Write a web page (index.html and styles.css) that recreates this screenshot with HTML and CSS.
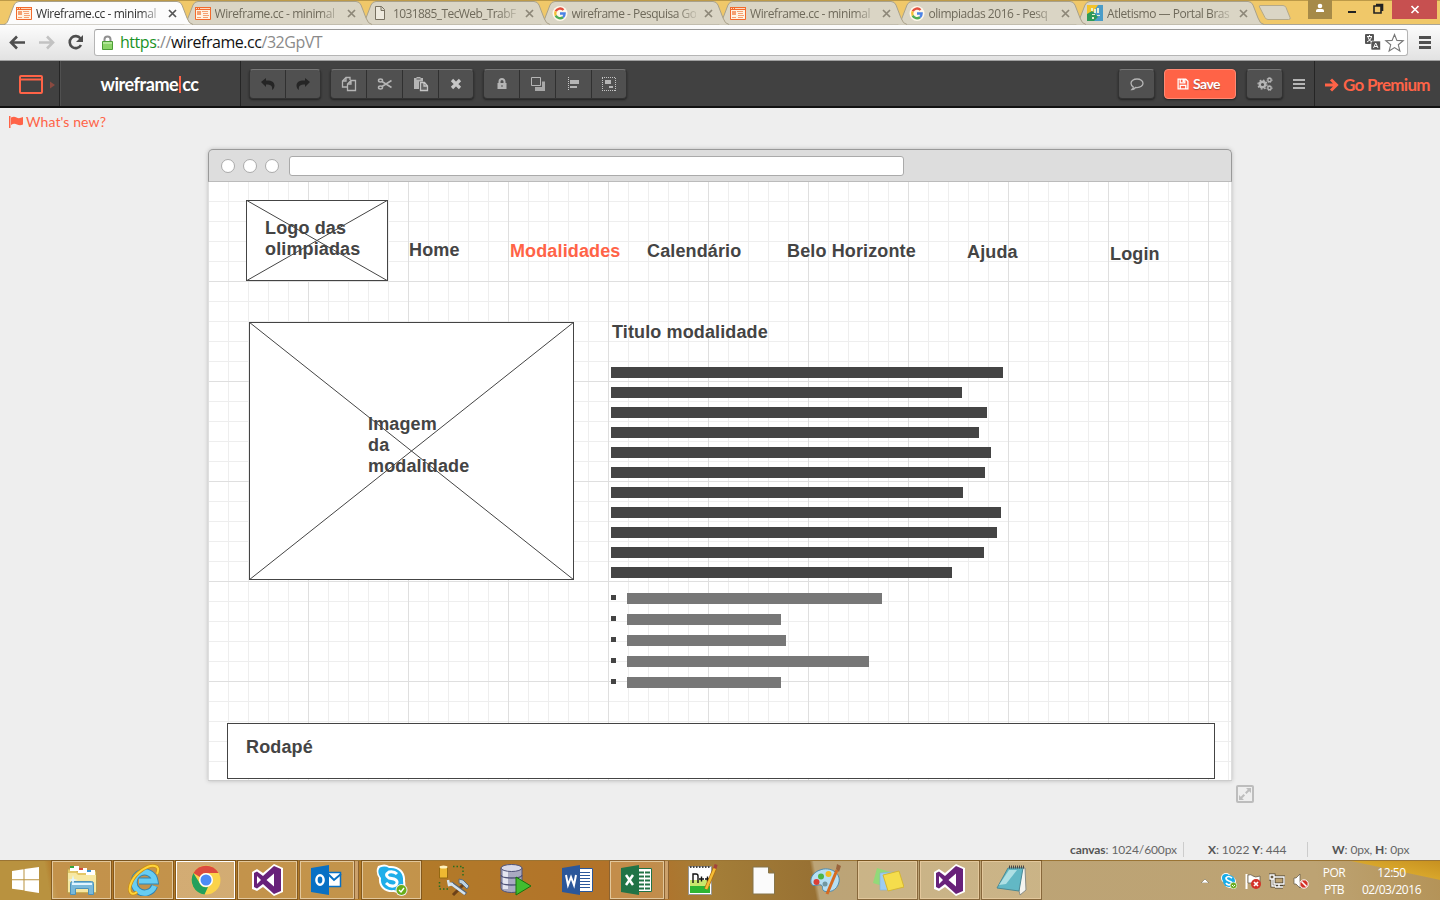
FILE: index.html
```html
<!DOCTYPE html>
<html lang="pt-BR">
<head>
<meta charset="utf-8">
<title>Wireframe.cc - minimal</title>
<link rel="stylesheet" href="styles.css">
</head>
<body>
<svg class="defs" width="0" height="0">
  <symbol id="tabshape" viewBox="0 0 190 25"><path d="M0 24.500C3 24 4 21 5 18L10 5Q11.500 1.500 15 1.500H173Q176.500 1.500 178 5L183 18Q185 24 189 24.500" /></symbol>
  <symbol id="wf" viewBox="0 0 16 13"><path fill="#fff3e2" stroke="#f26a2c" d="M.5.5h15v12H.5z"/><path fill="#f26a2c" d="M0 0h16v3H0z"/><path fill="#ffd9bd" d="M1 1h1v1H1zM3 1h1v1H3zM5 1h10v1H5z"/><path fill="#f5a071" d="M2 4h4v4H2zM2 10h4v1H2zM7 4h6v1H7zM8 6h5v1H8zM8 8h6v1H8zM8 10h5v1H8z"/></symbol>
  <symbol id="x" viewBox="0 0 9 9"><path d="M1 1l7 7M8 1L1 8" fill="none" stroke="currentColor" stroke-width="1.700"/></symbol>
  <symbol id="goog" viewBox="0 0 14 14"><circle cx="7" cy="7" r="7" fill="#fff8eb"/><g fill="none" stroke-width="2.200"><path stroke="#e34f3d" d="M3 5a4.500 4.500 0 0 1 7.300-1.300"/><path stroke="#f5bd32" d="M3 5a4.500 4.500 0 0 0 0 4"/><path stroke="#4fac56" d="M3 9a4.500 4.500 0 0 0 6.800 1.500"/><path stroke="#4b83e6" d="M7 7h4.300q0 2.300-1.500 3.500"/></g></symbol>
  <symbol id="vs" viewBox="0 0 32 32"><path d="M22 0l9 4v24l-9 4-11-9-6 4-5-2V8l5-3 6 4z" fill="#fff"/><path d="M22 2l7 3v22l-7 3L11 20l-6 4.500L2 23V9l3-1.500L11 12zM22 9.500L14.500 16l7.500 6.500zM5 12v8l4-4z" fill="#68217a" fill-rule="evenodd"/></symbol>
</svg>

<header class="tabs">
  <div class="tab active"><svg class="shape"><use href="#tabshape"/></svg><svg class="fav"><use href="#wf"/></svg><span>Wireframe.cc - minimal</span><svg class="cl"><use href="#x"/></svg></div>
  <div class="tab t2"><svg class="shape"><use href="#tabshape"/></svg><svg class="fav"><use href="#wf"/></svg><span>Wireframe.cc - minimal</span><svg class="cl"><use href="#x"/></svg></div>
  <div class="tab t3"><svg class="shape"><use href="#tabshape"/></svg><svg class="fav doc" viewBox="0 0 16 14"><path d="M3.500.5h6l3 3v10h-9zM9 .5v4h4" fill="#eeeade" stroke="#777060"/></svg><span>1031885_TecWeb_TrabF</span><svg class="cl"><use href="#x"/></svg></div>
  <div class="tab t4"><svg class="shape"><use href="#tabshape"/></svg><svg class="fav g"><use href="#goog"/></svg><span>wireframe - Pesquisa Go</span><svg class="cl"><use href="#x"/></svg></div>
  <div class="tab t5"><svg class="shape"><use href="#tabshape"/></svg><svg class="fav"><use href="#wf"/></svg><span>Wireframe.cc - minimal</span><svg class="cl"><use href="#x"/></svg></div>
  <div class="tab t6"><svg class="shape"><use href="#tabshape"/></svg><svg class="fav g"><use href="#goog"/></svg><span>olimpiadas 2016 - Pesq</span><svg class="cl"><use href="#x"/></svg></div>
  <div class="tab t7"><svg class="shape"><use href="#tabshape"/></svg><svg class="fav sq" viewBox="0 0 16 16"><path fill="#4a9cc8" d="M0 0h16v16H0z"/><path fill="#f3c32a" d="M0 0h11L4 10H0z"/><path fill="#2c9a58" d="M0 9l5-3 6 6-4 4H0z"/><path fill="#e8efd0" d="M4 3h2v3H4zM7 4h2v4H7zM10 3h2v5h-2zM5 9h3v1H5zM10 10h3v1h-3zM5 12h2v2H5z"/></svg><span>Atletismo — Portal Bras</span><svg class="cl"><use href="#x"/></svg></div>
  <svg class="newtab" viewBox="0 0 34 18"><path d="M2 1.500h23q2 0 3 2l4 10q1 2-1.500 2H10q-2 0-3-2L1.500 3Q1 1.500 2 1.500z" fill="#dad5c5" stroke="#b4a98a"/></svg>
  <div class="win">
    <svg class="user" viewBox="0 0 24 19"><circle cx="12" cy="6" r="2.300" fill="#fff"/><path d="M8 12V10.500Q8 9 10 9h4q2 0 2 1.500V12z" fill="#fff"/></svg>
    <svg class="wb" viewBox="0 0 60 19"><path d="M16 11h8v2h-8z" fill="#222"/><path d="M42 6h7v7h-7zM44 4.500h6.500V11" fill="none" stroke="#222" stroke-width="1.600"/></svg>
    <svg class="wclose" viewBox="0 0 45 19"><path d="M19.500 6l7 7m0-7l-7 7" stroke="#fff" stroke-width="1.700"/></svg>
  </div>
</header>

<div class="address">
  <svg class="navs" viewBox="0 0 94 35"><g fill="none" stroke-width="2.600"><path stroke="#4e4e4e" d="M11 17.500h14M17 11.500l-6 6 6 6"/><path stroke="#c2c2c2" d="M39 17.500h14M47 11.500l6 6-6 6"/><path stroke="#4e4e4e" d="M80.500 13.500A6 6 0 1 0 81 20"/></g><path fill="#4e4e4e" d="M83 10v7h-7z"/></svg>
  <div class="omni">
    <svg class="lock" viewBox="0 0 13 16"><path d="M3.500 7V4.500a3 3 0 0 1 6 0V7" fill="none" stroke="#909090" stroke-width="2"/><path d="M1.500 6.500h10v8h-10z" fill="#8bd468" stroke="#4c9d37"/><path d="M2 7h9v2H2z" fill="#b1e797"/></svg>
    <p><span class="green">https</span><span class="grey">://</span>wireframe.cc<span class="grey">/32GpVT</span></p>
    <svg class="omi" viewBox="0 0 42 20"><rect x="1" y="1" width="9" height="10" rx="1" fill="#555"/><rect x="7" y="8" width="9.500" height="9" rx="1" fill="#555" stroke="#fff" stroke-width=".6"/><path d="M3 3.500h5M5.500 2v1.500M4 4q1 4 4 5M7.500 4Q7 7 3 9M9.500 15l2.200-5 2.300 5M10.300 13.500h3" stroke="#fff" fill="none"/><path d="M30.500 1.500l2.400 5.900 6.300.4-4.900 4 1.600 6.200-5.400-3.400-5.400 3.400 1.600-6.200-4.900-4 6.300-.4z" fill="#fff" stroke="#777" stroke-width="1.100"/></svg>
  </div>
  <svg class="burger" viewBox="0 0 14 13"><path d="M1 1.500h12M1 6.500h12M1 11.500h12" stroke="#505050" stroke-width="2.800"/></svg>
</div>

<nav class="app">
  <div class="device"><svg width="40" height="24" viewBox="0 0 40 24"><rect x="2" y="4" width="22" height="17" rx="1" fill="none" stroke="#ff6347" stroke-width="2"/><path d="M2 7.500h22" stroke="#ff6347" stroke-width="2"/><path d="M3 5.500h1M5.500 5.500h1" stroke="#414141"/><path d="M32 9.500v7l5-3.500z" fill="#8a4a40"/></svg></div>
  <div class="brand">wireframe<i></i>cc</div>
  <div class="grp g1">
    <b><svg viewBox="0 0 16 16"><path fill="#252525" d="M1 6l5-4v2.500c5-.5 8.500 1.500 8.500 5 0 2-1 3.500-2.500 4.500.8-4-1-5.500-6-5.500V11z"/></svg></b>
    <b><svg viewBox="0 0 16 16"><path fill="#252525" d="M15 6l-5-4v2.500C5 4 1.500 6 1.500 9.500c0 2 1 3.500 2.500 4.500-.8-4 1-5.500 6-5.500V11z"/></svg></b>
  </div>
  <div class="grp g2">
    <b><svg viewBox="0 0 16 16"><path fill="none" stroke="#b5b5b5" stroke-width="1.300" d="M6 11H1.500V5L5 1.500h4V4M1.500 5H5V1.500M6.500 14.500V8L10 4.500h4.500v10zM6.500 8H10V4.500"/></svg></b>
    <b><svg viewBox="0 0 16 16"><g fill="none" stroke="#b5b5b5" stroke-width="1.500"><ellipse cx="3.500" cy="4.500" rx="2" ry="1.500"/><ellipse cx="3.500" cy="11.500" rx="2" ry="1.500"/><path d="M5 5.500l9.500 6M5 10.500l9.500-6"/></g></svg></b>
    <b><svg viewBox="0 0 16 16"><path fill="#b5b5b5" d="M1 2h2.500V1h4v1H10v3.500H6V13H1z"/><path fill="#555" d="M3.500 2.500h4v1h-4z"/><path fill="#666" stroke="#c5c5c5" stroke-width="1.300" d="M7.500 6.500h4L14.500 10v4.500h-7zM11 6.500V10h3.500"/></svg></b>
    <b><svg viewBox="0 0 16 16"><path d="M4 4l8 8m0-8l-8 8" stroke="#c6c6c6" stroke-width="3.200"/></svg></b>
  </div>
  <div class="grp g3">
    <b><svg viewBox="0 0 16 16"><path fill="#b5b5b5" d="M3.500 7h9v6h-9z"/><path fill="none" stroke="#b5b5b5" stroke-width="2" d="M5.500 8V5.500a2.500 2.500 0 0 1 5 0V8"/><path fill="#555" d="M7.500 9h1v2h-1z"/></svg></b>
    <b><svg viewBox="0 0 16 16"><path fill="#a8a8a8" d="M12 5.500h3V15H5v-4h7z"/><path fill="#505050" stroke="#b5b5b5" d="M1.500 1.500h9v8h-9z"/></svg></b>
    <b><svg viewBox="0 0 16 16"><path stroke="#c5c5c5" stroke-dasharray="1 1" d="M2.500 1v14"/><path fill="#b5b5b5" d="M4 4h9v4H4zM4 10h7v2H4z"/></svg></b>
    <b><svg viewBox="0 0 16 16"><path fill="none" stroke="#c5c5c5" stroke-dasharray="1 1" d="M1 1.500h14M1 14.500h14M1.500 2v13M14.500 2v13"/><path fill="#b5b5b5" d="M4 4h6v4H4zM8 10h4v2H8z"/></svg></b>
  </div>
  <div class="grp g4"><b><svg viewBox="0 0 16 16"><path fill="none" stroke="#b5b5b5" stroke-width="1.300" d="M8 3c3.500 0 6 2 6 4.300s-2.500 4.300-6 4.300l-1.500-.1Q5 13.500 3 13.500 4.500 12 4.300 11 2 9.500 2 7.300C2 5 4.500 3 8 3z"/></svg></b></div>
  <div class="save"><svg viewBox="0 0 13 13"><path fill="none" stroke="#fff" stroke-width="1.400" d="M1.200 1.200h8.300l2.300 2.300v8.300H1.200zM3.500 1.500v3.800h5V1.500M3.500 11.500V8h6v3.500"/><path fill="#fff" d="M6 1h2v3.500H6z"/></svg>Save</div>
  <div class="grp g5"><b><svg viewBox="0 0 16 16"><circle cx="5.500" cy="8.500" r="2.800" fill="none" stroke="#b5b5b5" stroke-width="2.400"/><circle cx="5.500" cy="8.500" r="4.500" fill="none" stroke="#b5b5b5" stroke-width="1.300" stroke-dasharray="1.700 1.830"/><g fill="none" stroke="#b5b5b5" stroke-width="1.400"><circle cx="12.500" cy="4" r="1.700"/><circle cx="12.500" cy="12" r="1.700"/></g><g fill="none" stroke="#b5b5b5" stroke-dasharray="1 1.200"><circle cx="12.500" cy="4" r="2.600"/><circle cx="12.500" cy="12" r="2.600"/></g></svg></b></div>
  <svg class="menu" viewBox="0 0 12 12"><path d="M0 2h12M0 6h12M0 10h12" stroke="#b5b5b5" stroke-width="1.800"/></svg>
  <div class="premium"><svg viewBox="0 0 15 14"><path d="M1 7h11M7 1.500L12.500 7 7 12.500" fill="none" stroke="#ff6347" stroke-width="3"/></svg>Go Premium</div>
</nav>

<main>
  <div class="news"><svg viewBox="0 0 14 12"><path fill="#ff6347" d="M0 0h1.500v12H0zM2 1.500Q5 0 7.500 1.500T14 1v7.500q-3 1.500-6 0T2 9z"/></svg>What's new?</div>
  <section class="browser">
    <div class="bar"><i></i><i></i><i></i><div class="url"></div></div>
    <div class="canvas">
      <svg class="item logo" width="142" height="81"><rect x=".5" y=".5" width="141" height="80"/><path d="M0 0l142 81M142 0L0 81"/></svg>
      <p class="item tlogo">Logo das<br>olimpiadas</p>
      <p class="item home">Home</p>
      <p class="item modal">Modalidades</p>
      <p class="item cal">Calendário</p>
      <p class="item belo">Belo Horizonte</p>
      <p class="item ajuda">Ajuda</p>
      <p class="item login">Login</p>
      <svg class="item image" width="325" height="258"><rect x=".5" y=".5" width="324" height="257"/><path d="M0 0l325 258M325 0L0 258"/></svg>
      <p class="item timage">Imagem<br>da<br>modalidade</p>
      <p class="item title">Titulo modalidade</p>
      <div class="item lines">
        <i style="width:392px"></i><i style="width:351px"></i><i style="width:376px"></i><i style="width:368px"></i><i style="width:380px"></i><i style="width:374px"></i><i style="width:352px"></i><i style="width:390px"></i><i style="width:386px"></i><i style="width:373px"></i><i style="width:341px"></i>
      </div>
      <div class="item list">
        <div><b></b><i style="width:255px"></i></div><div><b></b><i style="width:154px"></i></div><div><b></b><i style="width:159px"></i></div><div><b></b><i style="width:242px"></i></div><div><b></b><i style="width:154px"></i></div>
      </div>
      <div class="item foot">Rodapé</div>
    </div>
    <svg class="resize" viewBox="0 0 18 18"><rect x="1" y="1" width="16" height="16" rx="1" fill="none" stroke="#bdbdbd" stroke-width="2"/><path d="M5 13l8-8" stroke="#bdbdbd" stroke-width="2" stroke-dasharray="4.700 2"/><path fill="#bdbdbd" d="M10 3h5v5zM3 10v5h5z"/></svg>
  </section>
  <div class="status"><span class="s1"><b>canvas</b>: 1024/600px</span><span class="s2"><b>X</b>: 1022 <b>Y</b>: 444</span><span class="s3"><b>W</b>: 0px, <b>H</b>: 0px</span></div>
</main>

<footer class="task">
  <div class="start"><svg viewBox="0 0 28 26"><path fill="#fff" d="M0 4l11.500-1.700v10H0zM12.500 2.100L27 0v12.300H12.500zM0 13.300h11.500v10L0 21.700zM12.500 13.300H27V26l-14.500-2.300z"/></svg></div>
  <div class="tb on"><svg viewBox="0 0 32 32"><path fill="#e4c767" stroke="#b79a4d" d="M1.500 5h8l1 2h20v22h-29z"/><path fill="#fff" d="M4 2h9v5H4zM12 4h9v5h-9zM20 6h9v5h-9z"/><path fill="#35a83a" d="M4 2h4v2H4z"/><path fill="#d64b38" d="M13 4h4v2h-4z"/><path fill="#3b96d1" d="M21 6h4v2h-4z"/><path fill="#f7e8a2" d="M2 9h8l2 2h18v17H2z"/><path fill="#79b9da" stroke="#4e93ba" d="M4.500 19.500q0-2 2-2h19q2 0 2 2v11h-5v-6h-13v6h-5z"/><path fill="#e1f5ff" d="M6 19h20v2H6zM7 11l1 4 4 1-4 1-1 4-1-4-4-1 4-1z"/></svg></div>
  <div class="tb on"><svg viewBox="0 0 32 32"><path d="M26.500 22A10.500 10.500 0 1 1 27 17H11" fill="none" stroke="#2f83b3" stroke-width="7"/><path d="M26.500 22A10.500 10.500 0 1 1 27 17H11" fill="none" stroke="#67cdf3" stroke-width="5.200"/><path d="M29 10q3-7-2-8C20 0 8 9 4 17-1 27 3 33 9 28" fill="none" stroke="#cb9013" stroke-width="3.500"/><path d="M29 10q3-7-2-8C20 0 8 9 4 17-1 27 3 33 9 28" fill="none" stroke="#ffd43a" stroke-width="2"/></svg></div>
  <div class="tb on hot"><svg viewBox="0 0 32 32"><circle cx="16" cy="16" r="14.500" fill="#fbd34a"/><path fill="#dc4b3e" d="M3.400 9A14.500 14.500 0 0 1 28.600 9H16a7 7 0 0 0-6.200 4z"/><path fill="#22a05c" d="M3.400 9l6.500 10.500A7 7 0 0 0 18 23l-3.500 7.400A14.500 14.500 0 0 1 3.400 9z"/><circle cx="16" cy="16" r="7" fill="#fff"/><circle cx="16" cy="16" r="5.500" fill="#4c8bf5"/></svg></div>
  <div class="tb on"><svg><use href="#vs"/></svg></div>
  <div class="tb on multi"><svg viewBox="0 0 32 32"><path fill="#fff" stroke="#0870c4" stroke-width="1.500" d="M15 8.500h14.500v14H15z"/><path d="M17 10l6 6 7-6" fill="none" stroke="#0870c4" stroke-width="2"/><path fill="#0870c4" d="M0 4l18-3v30L0 28z"/><ellipse cx="9" cy="16" rx="3.600" ry="4.700" fill="none" stroke="#fff" stroke-width="2.500"/></svg></div>
  <div class="tb on"><svg viewBox="0 0 32 32"><path fill="#fff" d="M2 2q7-3 11 0c10-1 17 6 16 15 2 9-5 13-11 11C9 29 2 23 3 14Q-1 8 2 2z"/><path fill="#1faee9" d="M4 3.500q5-2 9 .5C22 3 28 9 27 17c1.500 7-4 11-9 9C10 27 4 22 5 14 2 10 1.500 6 4 3.500z"/><path d="M21 10q-3-3-8-2-5 3 0 6l5 1q5 2 2 6-5 3-10-2" fill="none" stroke="#fff" stroke-width="3"/><circle cx="25.500" cy="26" r="6" fill="#eee"/><circle cx="25.500" cy="26" r="5" fill="#68ae19"/><path d="M23 26l2 2 3-4" fill="none" stroke="#fff" stroke-width="1.400"/></svg></div>
  <div class="tb"><svg viewBox="0 0 32 32"><path fill="#eeb931" stroke="#946911" d="M1.500 3h8v11h-8z"/><ellipse cx="5.500" cy="3" rx="4" ry="1.500" fill="#fff2be"/><path d="M15 2.500h10v11M1.500 18v7H12" fill="none" stroke="#256e20" stroke-width="1.500" stroke-dasharray="1.500 2"/><path d="M27 19L15 31" stroke="#6d4118" stroke-width="3"/><path d="M13 19l15 11" stroke="#596676" stroke-width="4"/><path d="M12 19l15 11" stroke="#d4e4f0" stroke-width="2.500"/><path d="M21 15l4 1 6 6-2 3-5-5-3-1z" fill="#bdd2e1" stroke="#5c6b79"/><path d="M10 16l1 5 4-1" fill="none" stroke="#d4e4f0" stroke-width="2.500"/></svg></div>
  <div class="tb"><svg viewBox="0 0 32 32"><path fill="#aaaac2" stroke="#505379" d="M1 4v20c0 6 21 6 21 0V4"/><path d="M3 5v20h5V5z" fill="#e5e5f1"/><ellipse cx="11.500" cy="4" rx="10.500" ry="3.500" fill="#d9d9e7" stroke="#505379"/><path d="M1 11c0 4 21 4 21 0M1 18c0 4 21 4 21 0" fill="none" stroke="#505379" stroke-width="1.300"/><path d="M16 13l15 9-15 9z" fill="#41bd2f" stroke="#18720e"/></svg></div>
  <div class="tb"><svg viewBox="0 0 32 32"><path fill="#fff" stroke="#2b579a" d="M16 4.500h14.500v23H16z"/><path d="M18 8.500h10M18 11.500h10M18 14.500h10M18 17.500h10M18 20.500h10M18 23.500h10" stroke="#2b579a"/><path fill="#2b579a" d="M0 4l18-3v30L0 28z"/><path d="M4 11l2 10 3-8 3 8 2-10" fill="none" stroke="#fff" stroke-width="2"/></svg></div>
  <div class="tb on multi"><svg viewBox="0 0 32 32"><path fill="#fff" stroke="#217346" d="M16 4.500h14.500v23H16z"/><path d="M18 8.500h11M18 12.500h11M18 16.500h11M18 20.500h11M18 24.500h11" stroke="#217346" stroke-width="2" stroke-dasharray="5 1"/><path fill="#217346" d="M0 4l18-3v30L0 28z"/><path d="M5 11l7 10m0-10L5 21" stroke="#fff" stroke-width="2.500"/></svg></div>
  <div class="tb"><svg viewBox="0 0 32 32"><path fill="#fff" stroke="#999" d="M2.500 2.500h23v28h-23z"/><path fill="#c9e86d" d="M4 16h20v7H4z"/><path fill="#2eb632" d="M4 22h20v7H4z"/><path d="M4 3h21" stroke="#444" stroke-width="2" stroke-dasharray="1.500 1.500"/><path d="M7 19v-9h3q2 0 2 2v7M13 15h5M15.500 12.500v5M19 15h5M21.500 12.500v5" fill="none" stroke="#111" stroke-width="1.400"/><path d="M29 4L20 25" stroke="#ac6c12" stroke-width="4"/><path d="M29 4L20 25" stroke="#f5bd35" stroke-width="2.500"/><path d="M28 2l3 1" stroke="#a4433c" stroke-width="4"/></svg></div>
  <div class="tb"><svg viewBox="0 0 32 32"><path fill="#fbfbfb" stroke="#86754a" d="M5 3h15.500l6 6v21H5zM20.500 3v6h6"/></svg></div>
  <div class="tb"><svg viewBox="0 0 32 32"><path fill="#b6dff4" stroke="#4f89aa" d="M10 6C20 2 31 9 29 18c-2 9-10 11-15 9-3-2 0-5-3-6-4-1-8 3-10-2C0 13 4 8 10 6z"/><circle cx="6.500" cy="18" r="3" fill="#db3f35"/><circle cx="11" cy="12.500" r="3" fill="#4cb545"/><circle cx="18.500" cy="10" r="3" fill="#f3bd23"/><circle cx="15" cy="20" r="2.500" fill="#7297a0"/><path d="M27 6L17 30" stroke="#d56b22" stroke-width="3"/><path d="M26 5l1-5 4 2-2 6z" fill="#9a643c"/></svg></div>
  <div class="tb on"><svg viewBox="0 0 32 32"><path d="M5 4l13 4-4 15-13-4z" fill="#92d979"/><path d="M8 9l14-1v18H8z" fill="#9dccf2" stroke="#82b1dc" stroke-width=".6"/><path d="M11 11l16-4 5 16-16 4z" fill="#f5dd4c" stroke="#d5b534"/></svg></div>
  <div class="tb on"><svg><use href="#vs"/></svg></div>
  <div class="tb on"><svg viewBox="0 0 32 32"><path fill="#f4f4ef" stroke="#8a8e87" d="M18 4h11l1 22-6 5z"/><path fill="#62b8c5" stroke="#4b8994" d="M12 4h15l-4 23-22-3z"/><path fill="#aee0e4" d="M13 6h8L10 20l-7 1z"/><path d="M13 3h15" stroke="#474747" stroke-width="3" stroke-dasharray="1 1"/></svg></div>
  <div class="tray">
    <svg class="up" viewBox="0 0 8 5"><path fill="#fff" stroke="#655c45" stroke-width=".5" d="M0 5l4-4 4 4z"/></svg>
    <svg viewBox="0 0 16 16"><circle cx="5" cy="5" r="5" fill="#fff"/><circle cx="9" cy="9" r="6" fill="#fff"/><circle cx="5" cy="5" r="4" fill="#17ace9"/><circle cx="8" cy="8" r="6" fill="#17ace9"/><path d="M11 5Q7 2 5 5q0 2 3 3 4 1 2 3-3 2-5-1" fill="none" stroke="#fff" stroke-width="1.700"/><circle cx="12.500" cy="12.500" r="3.300" fill="#6cad21" stroke="#fff" stroke-width=".6"/><path d="M11 12l1.500 1.500L14 12" fill="none" stroke="#fff"/></svg>
    <svg viewBox="0 0 16 16"><path d="M1.500 1v15" stroke="#fff" stroke-width="2"/><path fill="#fff" stroke="#5a5144" stroke-width=".7" d="M3 2q3-1 5 1t7 0v7H3z"/><circle cx="11" cy="11" r="5" fill="#d33227"/><path d="M9 9l4 4m0-4l-4 4" stroke="#fff" stroke-width="1.700"/></svg>
    <svg viewBox="0 0 16 16"><path d="M5 4h10v7H5zM10 11v3M6 14h8M1 2h4v4H1zM3 6v7h4" fill="none" stroke="#4b4333" stroke-width="3"/><path d="M5 4h10v7H5zM10 11v3M6 14h8M1 2h4v4H1zM3 6v7h4" fill="none" stroke="#fff" stroke-width="1.400"/></svg>
    <svg viewBox="0 0 16 16"><path fill="#fff" stroke="#5b5344" stroke-width=".7" d="M1 5h2l4-4v14l-4-4H1z"/><circle cx="11" cy="11" r="4.200" fill="#d33227" stroke="#fff"/><path d="M8.500 8.500l5 5" stroke="#fff" stroke-width="1.600"/></svg>
    <div class="lang">POR<br>PTB</div><div class="clock">12:50<br>02/03/2016</div>
  </div>
</footer>
</body>
</html>
```

FILE: styles.css
```css
* { box-sizing: border-box; }
body { margin: 0; width: 1440px; height: 900px; overflow: hidden; display: flex; flex-direction: column; background: #eee; font-family: "Open Sans", sans-serif; }
p { margin: 0; }
svg { display: block; flex: none; }
.defs { position: absolute; }

/* browser tabs */
.tabs { height: 25px; flex: none; display: flex; padding-left: 4px; background: #f0c869; border-top: 1px solid #bd9a48; border-bottom: 1px solid #aaa596; position: relative; }
.tab { position: relative; width: 178.500px; height: 24px; flex: none; display: flex; align-items: center; padding-left: 12px; color: #6f6a5b; font-size: 12px; }
.tab.active { z-index: 9; color: #333; }
.t2 { z-index: 8; } .t3 { z-index: 7; } .t4 { z-index: 6; } .t5 { z-index: 5; } .t6 { z-index: 4; } .t7 { z-index: 3; }
.shape { position: absolute; left: 0; top: -1px; width: 190px; height: 25px; fill: #dad5c5; stroke: #a9a18a; }
.active .shape { fill: #fcfcfc; }
.fav { position: relative; width: 16px; height: 13px; margin-right: 4px; }
.fav.g { height: 15px; } .fav.sq { height: 16px; } .fav.doc { height: 14px; margin-right: 5px; margin-left: -1px; }
.tab span { position: relative; width: 124px; white-space: nowrap; letter-spacing: -.42px; -webkit-mask-image: linear-gradient(90deg, #000 84%, rgba(0,0,0,.2) 100%); mask-image: linear-gradient(90deg, #000 84%, rgba(0,0,0,.2) 100%); }
.t3 span { letter-spacing: -.6px; }
.t4 span { letter-spacing: -.5px; }
.t6 span, .t7 span { letter-spacing: -.45px; }
.cl { position: relative; width: 9px; height: 9px; margin-left: 8px; color: #8d8778; }
.active .cl { color: #555; }
.newtab { width: 34px; height: 18px; margin: 3px 0 0 4px; }
.win { display: flex; margin-left: auto; margin-top: -1px; margin-right: 3px; height: 19px; }
.user { width: 24px; height: 19px; background: #a68a48; }
.wb { width: 60px; height: 19px; }
.wclose { width: 45px; height: 19px; background: #c75050; }

/* address row */
.address { height: 36px; flex: none; display: flex; align-items: center; background: linear-gradient(#fcfcfc, #e2e2e2); border-bottom: 1px solid #a0a0a0; }
.navs { width: 94px; height: 35px; }
.omni { width: 1314px; height: 27px; display: flex; align-items: center; background: #fff; border: 1px solid #b5b5b5; border-top-color: #999; border-radius: 3px; padding: 0 1px 0 6px; }
.lock { width: 13px; height: 16px; margin-right: 6px; }
.omni p { font-size: 16px; letter-spacing: -.46px; line-height: 22px; color: #111; flex: 1; position: relative; top: -1px; }
.omni .green { color: #1a9326; } .omni .grey { color: #8a8a8a; }
.omi { width: 42px; height: 20px; }
.burger { width: 14px; height: 13px; margin-left: 10px; }

/* editor toolbar */
.app { height: 47px; flex: none; display: flex; align-items: flex-start; background: #414141; border-bottom: 2px solid #111; font-family: Lato, sans-serif; }
.device { width: 60px; height: 45px; border-right: 1px solid #252525; padding: 11px 0 0 18px; }
.brand { width: 181px; height: 45px; display: flex; align-items: center; justify-content: center; color: #fff; font-size: 18px; font-weight: 700; letter-spacing: -.45px; border-right: 1px solid #252525; border-left: 1px solid #505050; padding: 1px 2px 0 0; }
.brand i { width: 2px; height: 17px; margin: 0 1px; background: #ff6347; }
.grp { display: flex; height: 30px; margin-top: 8px; background: #505050; border: 1px solid #333; border-top-color: #777; border-radius: 4px; box-shadow: 0 1px 2px #222; }
.grp b { width: 36px; display: flex; align-items: center; justify-content: center; border-left: 1px solid #303030; }
.grp b:first-child { width: 35px; border-left: 0; }
.grp b:last-child { width: 35px; }
.grp svg { width: 16px; height: 16px; }
.g1 { margin-left: 8px; } .g2, .g3 { margin-left: 9px; }
.g4 { margin-left: 491px; } .g5 { margin-left: 10px; }
.save { width: 72px; height: 30px; margin: 8px 0 0 9px; display: flex; align-items: center; justify-content: center; gap: 4px; background: #ff6347; border: 1px solid #ff8a74; border-radius: 4px; box-shadow: 0 1px 2px #222; color: #fff; font-size: 14px; font-weight: 700; letter-spacing: -.5px; padding: 0 3px 1px 0; text-shadow: 0 1px 1px #a44838; }
.save svg { width: 12px; height: 12px; }
.menu { width: 12px; height: 12px; margin: 17px 0 0 10px; }
.premium { flex: 1; height: 45px; margin-left: 9px; padding: 1px 0 0 9px; display: flex; align-items: center; gap: 4px; border-left: 1px solid #252525; color: #ff6347; font-size: 17px; font-weight: 700; letter-spacing: -.73px; white-space: nowrap; }
.premium svg { width: 15px; height: 14px; position: relative; top: 1px; }

/* work area */
main { height: 752px; flex: none; display: flex; flex-direction: column; font-family: Lato, sans-serif; }
.news { height: 41px; padding: 5px 0 0 9px; display: flex; gap: 3px; color: #ff6347; font-size: 14px; line-height: 18px; letter-spacing: .1px; }
.news svg { width: 14px; height: 12px; margin-top: 3px; }
.browser { position: relative; width: 1024px; height: 632px; margin-left: 208px; box-shadow: 0 0 4px #bbb; border-radius: 5px 5px 0 0; }
.bar { height: 33px; display: flex; align-items: center; background: #ddd; border: 1px solid #999; border-bottom-color: #bbb; border-radius: 5px 5px 0 0; padding-left: 12px; gap: 8px; }
.bar i { width: 14px; height: 14px; border-radius: 50%; background: #fff; border: 1px solid #aaa; }
.bar .url { width: 615px; height: 20px; background: #fff; border: 1px solid #aaa; border-radius: 3px; margin-left: 2px; }
.canvas { position: relative; height: 599px; background-color: #fff; background-position: 0 -1px; background-image: linear-gradient(#dfdfdf 1px, transparent 1px), linear-gradient(90deg, #dfdfdf 1px, transparent 1px), linear-gradient(#eee 1px, transparent 1px), linear-gradient(90deg, #eee 1px, transparent 1px); background-size: 100px 100px, 100px 100px, 20px 20px, 20px 20px; box-shadow: inset 0 -1px #ccc, inset -1px 0 #ddd; color: #444; font: bold 18px/21px "Liberation Sans", sans-serif; letter-spacing: .13px; }
.item { position: absolute; white-space: nowrap; }
svg.item { fill: #fff; stroke: #444; stroke-width: 1; }
.logo { left: 38px; top: 18px; } .tlogo { left: 57px; top: 36px; }
.home { left: 201px; top: 58px; } .modal { left: 302px; top: 59px; color: #ff6347; }
.cal { left: 439px; top: 59px; } .belo { left: 579px; top: 59px; }
.ajuda { left: 759px; top: 60px; } .login { left: 902px; top: 62px; }
.image { left: 41px; top: 140px; } .timage { left: 160px; top: 232px; }
.title { left: 404px; top: 140px; }
.lines { left: 403px; top: 185px; display: flex; flex-direction: column; gap: 9px; }
.lines i { height: 11px; background: #444; }
.list { left: 403px; top: 411px; display: flex; flex-direction: column; gap: 10px; }
.list div { display: flex; height: 11px; gap: 11px; }
.list b { width: 5px; height: 5px; margin-top: 2px; background: #444; }
.list i { background: #777; }
.foot { left: 19px; top: 541px; width: 988px; height: 56px; border: 1px solid #444; background: #fff; padding: 13px 18px; }
.resize { position: absolute; left: 1028px; top: 636px; width: 18px; height: 18px; }
.status { margin-top: auto; height: 18px; display: flex; align-items: flex-start; justify-content: flex-end; color: #666; font-size: 12px; line-height: 16px; letter-spacing: -.1px; }
.status b { color: #555; }
.status span { border-right: 1px solid #ccc; height: 15px; white-space: nowrap; }
.s1 { padding-right: 6px; } .s2 { width: 124px; padding-left: 24px; } .s3 { width: 132px; padding-left: 24px; }
.status .s3 { border: 0; }

/* desktop taskbar */
.task { height: 40px; flex: none; display: flex; border-top: 1px solid #9a7434; background: linear-gradient(192deg, #c79120 0, #d8a62b 18px, transparent 19px) right / 120px 100% no-repeat, linear-gradient(80deg, #b9923f 0, #b9923f 50px, #b3792a 58px, #b27b29 400px, #b27129 640px, #a47e38 705px, #987133 804px, #bca477 808px, #bda373 1300px, #b39154 1440px); }
.start { width: 51px; padding: 6px 0 0 12px; }
.start svg { width: 28px; height: 26px; }
.tb { width: 59px; height: 38px; margin-left: 1px; margin-right: 2px; display: flex; align-items: center; justify-content: center; border: 1px solid transparent; }
.tb svg { width: 32px; height: 32px; }
.tb.on { border-color: #e2c79b; background: rgba(255,236,195,.22); box-shadow: 0 0 0 1px rgba(100,65,20,.6); }
.tb.hot { background: rgba(255,240,220,.42); border-color: #fff; }
.tb.multi { width: 54px; margin-right: 7px; box-shadow: 0 0 0 1px #8c6331, 4px 0 0 0 #cca16b, 5px 0 0 0 #8c6331; }
.tray { flex: 1; display: flex; align-items: center; justify-content: flex-end; gap: 8px; padding-right: 18px; color: #fff; font-size: 12px; line-height: 17px; text-align: center; letter-spacing: -.45px; }
.tray svg { width: 16px; height: 16px; }
.tray .up { width: 8px; height: 5px; margin-right: 4px; }
.lang { width: 26px; margin-left: 4px; }
.clock { width: 61px; margin-left: 6px; }
```
